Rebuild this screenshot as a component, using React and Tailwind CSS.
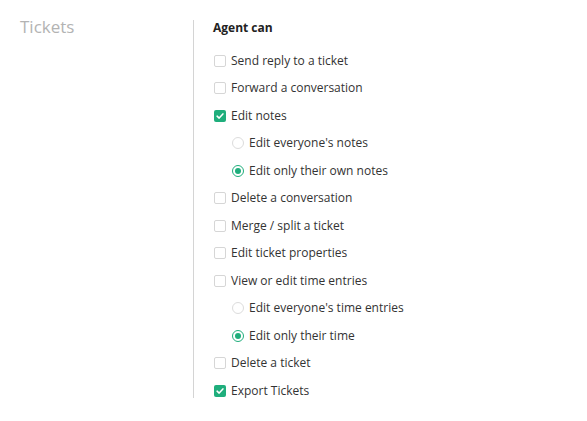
import React from 'react'

const permissions = [
  { label: 'Send reply to a ticket' },
  { label: 'Forward a conversation' },
  {
    label: 'Edit notes',
    checked: true,
    options: [
      { label: "Edit everyone's notes" },
      { label: 'Edit only their own notes', selected: true },
    ],
  },
  { label: 'Delete a conversation' },
  { label: 'Merge / split a ticket' },
  { label: 'Edit ticket properties' },
  {
    label: 'View or edit time entries',
    options: [
      { label: "Edit everyone's time entries" },
      { label: 'Edit only their time', selected: true },
    ],
  },
  { label: 'Delete a ticket' },
  { label: 'Export Tickets', checked: true },
]

function Checkbox({ checked }) {
  if (checked) {
    return (
      <span className="flex h-[12px] w-[12px] shrink-0 items-center justify-center rounded-[2px] bg-[#1fae7c]">
        <svg viewBox="0 0 12 12" className="h-[10px] w-[10px]">
          <path d="M2.5 6.2 L5 8.5 L9.5 3.5" fill="none" stroke="white" strokeWidth="1.8" strokeLinecap="round" strokeLinejoin="round" />
        </svg>
      </span>
    )
  }
  return <span className="h-[12px] w-[12px] shrink-0 rounded-[2px] border border-[#d6d6d6] bg-white" />
}

function Radio({ selected }) {
  if (selected) {
    return (
      <span className="flex h-[12px] w-[12px] shrink-0 items-center justify-center rounded-full border border-[#1fae7c] bg-white">
        <span className="h-[6px] w-[6px] rounded-full bg-[#1fae7c]" />
      </span>
    )
  }
  return <span className="h-[12px] w-[12px] shrink-0 rounded-full border border-[#dcdcdc] bg-white" />
}

export default function App() {
  return (
    <div className="flex h-[421px] w-[587px] bg-white font-['Segoe_UI','Open_Sans',sans-serif] text-[#333]">
      <div className="w-[193px] pl-[20px] pt-[15px]">
        <h2 className="text-[17px] leading-[24px] text-[#b3b3b3]">Tickets</h2>
      </div>

      <div className="mt-[20px] h-[378px] w-px bg-[#d4d4d4]" />

      <div className="pl-[19px] pt-[18px]">
        <h3 className="text-[12px] font-bold leading-[20px] text-[#222]">Agent can</h3>
        <ul className="mt-[9px] flex flex-col">
          {permissions.map((perm) => (
            <li key={perm.label}>
              <label className="flex h-[27.5px] items-center gap-[5px] pl-px text-[12px]">
                <Checkbox checked={perm.checked} />
                <span>{perm.label}</span>
              </label>
              {perm.options?.map((opt) => (
                <label key={opt.label} className="flex h-[27.5px] items-center gap-[5px] pl-[19px] text-[12px]">
                  <Radio selected={opt.selected} />
                  <span>{opt.label}</span>
                </label>
              ))}
            </li>
          ))}
        </ul>
      </div>
    </div>
  )
}
